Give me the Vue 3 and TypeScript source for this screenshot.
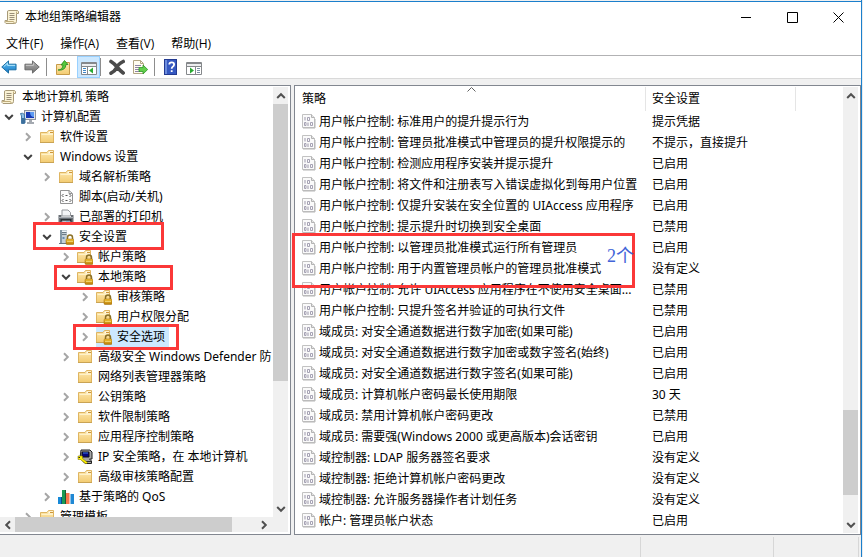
<script setup lang="ts">
import { ref } from 'vue'

interface TreeNode {
  label: string
  level: number
  icon: string
  state: 'open' | 'closed' | 'leaf'
}

interface Policy {
  name: string
  value: string
}

const menus: string[] = ['文件(F)', '操作(A)', '查看(V)', '帮助(H)']

const nodes: TreeNode[] = [
  { label: '本地计算机 策略', level: 0, icon: 'scroll', state: 'leaf' },
  { label: '计算机配置', level: 1, icon: 'computer', state: 'open' },
  { label: '软件设置', level: 2, icon: 'folder', state: 'closed' },
  { label: 'Windows 设置', level: 2, icon: 'folder', state: 'open' },
  { label: '域名解析策略', level: 3, icon: 'folder', state: 'closed' },
  { label: '脚本(启动/关机)', level: 3, icon: 'script', state: 'leaf' },
  { label: '已部署的打印机', level: 3, icon: 'printer', state: 'closed' },
  { label: '安全设置', level: 3, icon: 'server', state: 'open' },
  { label: '帐户策略', level: 4, icon: 'locked', state: 'closed' },
  { label: '本地策略', level: 4, icon: 'locked', state: 'open' },
  { label: '审核策略', level: 5, icon: 'locked', state: 'closed' },
  { label: '用户权限分配', level: 5, icon: 'locked', state: 'closed' },
  { label: '安全选项', level: 5, icon: 'locked', state: 'closed' },
  { label: '高级安全 Windows Defender 防', level: 4, icon: 'folder', state: 'closed' },
  { label: '网络列表管理器策略', level: 4, icon: 'folder', state: 'leaf' },
  { label: '公钥策略', level: 4, icon: 'folder', state: 'closed' },
  { label: '软件限制策略', level: 4, icon: 'folder', state: 'closed' },
  { label: '应用程序控制策略', level: 4, icon: 'folder', state: 'closed' },
  { label: 'IP 安全策略，在 本地计算机', level: 4, icon: 'ipsec', state: 'closed' },
  { label: '高级审核策略配置', level: 4, icon: 'folder', state: 'closed' },
  { label: '基于策略的 QoS', level: 3, icon: 'bars', state: 'closed' },
  { label: '管理模板', level: 2, icon: 'folder', state: 'closed' },
]

const policies: Policy[] = [
  { name: '用户帐户控制: 标准用户的提升提示行为', value: '提示凭据' },
  { name: '用户帐户控制: 管理员批准模式中管理员的提升权限提示的', value: '不提示，直接提升' },
  { name: '用户帐户控制: 检测应用程序安装并提示提升', value: '已启用' },
  { name: '用户帐户控制: 将文件和注册表写入错误虚拟化到每用户位置', value: '已启用' },
  { name: '用户帐户控制: 仅提升安装在安全位置的 UIAccess 应用程序', value: '已启用' },
  { name: '用户帐户控制: 提示提升时切换到安全桌面', value: '已禁用' },
  { name: '用户帐户控制: 以管理员批准模式运行所有管理员', value: '已启用' },
  { name: '用户帐户控制: 用于内置管理员帐户的管理员批准模式', value: '没有定义' },
  { name: '用户帐户控制: 允许 UIAccess 应用程序在不使用安全桌面...', value: '已禁用' },
  { name: '用户帐户控制: 只提升签名并验证的可执行文件', value: '已禁用' },
  { name: '域成员: 对安全通道数据进行数字加密(如果可能)', value: '已启用' },
  { name: '域成员: 对安全通道数据进行数字加密或数字签名(始终)', value: '已启用' },
  { name: '域成员: 对安全通道数据进行数字签名(如果可能)', value: '已启用' },
  { name: '域成员: 计算机帐户密码最长使用期限', value: '30 天' },
  { name: '域成员: 禁用计算机帐户密码更改', value: '已禁用' },
  { name: '域成员: 需要强(Windows 2000 或更高版本)会话密钥', value: '已启用' },
  { name: '域控制器: LDAP 服务器签名要求', value: '没有定义' },
  { name: '域控制器: 拒绝计算机帐户密码更改', value: '没有定义' },
  { name: '域控制器: 允许服务器操作者计划任务', value: '没有定义' },
  { name: '帐户: 管理员帐户状态', value: '已启用' },
]

const selected = ref('安全选项')
const treeThumb = { top: '0%', height: '70%' }
const treeThumbX = { left: '0%', width: '90%' }
const listThumb = { top: '74.3%', height: '20.6%' }
</script>

<template>
  <svg class="sprite" aria-hidden="true">
    <defs>
      <linearGradient id="g-folder" x1="0" y1="0" x2="0" y2="1">
        <stop offset="0" stop-color="#fdeab5" /><stop offset="1" stop-color="#f3cb70" />
      </linearGradient>
      <linearGradient id="g-lock" x1="0" y1="0" x2="0" y2="1">
        <stop offset="0" stop-color="#f4c63a" /><stop offset="1" stop-color="#b87c08" />
      </linearGradient>
      <linearGradient id="g-blue" x1="0" y1="0" x2="0" y2="1">
        <stop offset="0" stop-color="#67c8f4" /><stop offset="1" stop-color="#1273c4" />
      </linearGradient>
      <linearGradient id="g-gray" x1="0" y1="0" x2="0" y2="1">
        <stop offset="0" stop-color="#b0b0b0" /><stop offset="1" stop-color="#707070" />
      </linearGradient>
    </defs>
    <symbol id="i-scroll" viewBox="0 0 16 16">
      <path d="M4.500 1.500H13.500Q15 2 14.500 4.500H12.500V12.500Q12.500 14.500 10.500 14.500H2Q.5 14 1 11.500H3.500V3Q3.500 1.500 4.500 1.500Z" fill="#fbf3d5" stroke="#a89a78" />
      <path d="M5.500 4.500H10.500M5.500 6.500H10.500M5.500 8.500H10.500M5.500 10.500H10.500" stroke="#9a8f78" />
      <path d="M12.500 4.500Q12 2.500 13.500 2M1.500 12.500H9.500Q9.500 14 11 14.300" fill="none" stroke="#c0ad7c" />
    </symbol>
    <symbol id="i-computer" viewBox="0 0 16 16">
      <rect x="4.500" y="1.500" width="11" height="9" fill="#dfe3ea" stroke="#8c929c" />
      <rect x="6" y="3" width="8" height="6" fill="#1638b4" />
      <path d="M10 3H14V8Q10 8 10 3Z" fill="#5c9af2" />
      <path d="M9 11H12V13H14V15H7V13H9Z" fill="#a4a9b0" />
      <path d="M.5 4.500Q2.500 3.500 4.500 5.500V14.500H1.500V7Z" fill="#8cc0e8" stroke="#4478a4" />
      <path d="M2 9H5.500V14H2Z" fill="#3c6f9c" />
    </symbol>
    <symbol id="i-folder" viewBox="0 0 16 16">
      <path d="M1.500 3.500H8L9.500 1.500H14.500V13.500H1.500Z" fill="url(#g-folder)" stroke="#dfb561" />
      <path d="M9 4.500L10.300 2.500H14V4.500Z" fill="#fffbe9" />
      <path d="M11 3.500H14" stroke="#ce963a" />
      <path d="M2.500 5.500H14" stroke="#fff2c8" />
      <path d="M1 13.500H15" stroke="#c9a354" />
    </symbol>
    <symbol id="i-lock" viewBox="0 0 16 16">
      <path d="M9.500 10.500V8.500Q9.500 6 12 6T14.500 8.500V10.500" fill="none" stroke="#8b7127" stroke-width="1.500" />
      <rect x="8" y="10" width="8" height="5.500" rx="1" fill="url(#g-lock)" stroke="#9e6a08" stroke-width=".5" />
      <path d="M9 12.500H15" stroke="#f5dc7c" stroke-width=".8" />
    </symbol>
    <symbol id="i-locked" viewBox="0 0 16 16">
      <use href="#i-folder" x="-1" y="0" width="16" height="16" />
      <use href="#i-lock" />
    </symbol>
    <symbol id="i-server" viewBox="0 0 16 16">
      <path d="M2 1H9V15H2Z" fill="#c4d0d7" />
      <path d="M2 1H4V15H2Z" fill="#8397a4" />
      <path d="M4 3.500H8.500M4 5.500H8.500" stroke="#6b7a85" />
      <path d="M4 2.500H8.500" stroke="#f2f8fc" />
      <path d="M1 14.500H9" stroke="#667580" />
      <rect x="4.500" y="8" width="2" height="2" fill="#668bb0" />
      <use href="#i-lock" />
    </symbol>
    <symbol id="i-script" viewBox="0 0 16 16">
      <path d="M2.500 1.500H11L14.500 4.500V14.500H2.500Z" fill="#fcfcfc" stroke="#939393" />
      <path d="M11 1.500V4.500H14" fill="none" stroke="#939393" />
      <path d="M5.500 5L4 6.500L5.500 8M7.500 6.500H9.500M11.500 5L13 6.500L11.500 8M5.500 10L4 11.500L5.500 13M7.500 11.500H9.500M11.500 10L13 11.500L11.500 13" fill="none" stroke="#555" />
    </symbol>
    <symbol id="i-printer" viewBox="0 0 16 16">
      <path d="M4 1H10L12.500 3.500V7H4Z" fill="#f4f5f7" stroke="#96999d" />
      <path d="M.5 6H3.500V8H13V6H15.500V13H.500Z" fill="#6b7076" />
      <path d="M.500 8.500H15.500" stroke="#a7acb2" />
      <path d="M2.500 10H13.500V13H2.500Z" fill="#2c3034" />
      <path d="M4 12H12V15H4Z" fill="#eff6fb" stroke="#8d9aa5" />
      <rect x="8" y="12.500" width="3" height="2" fill="#5ba6de" />
    </symbol>
    <symbol id="i-ipsec" viewBox="0 0 16 16">
      <path d="M4 1H13L15 3V10H12.500L14.500 12V14.500H8L3 9Z" fill="#a4a4a4" stroke="#222" />
      <path d="M5 3H12V8H5Z" fill="#06067c" stroke="#111" />
      <path d="M6 4H11" stroke="#3f7aea" />
      <path d="M9 12.500H14" stroke="#333" />
      <path d="M1 7H5.500V9.500L10.500 13.500L9 15L3.500 10.500H1Z" fill="#fff200" stroke="#776e00" stroke-width=".5" />
      <path d="M1.500 8.500H3" stroke="#222" />
    </symbol>
    <symbol id="i-bars" viewBox="0 0 16 16">
      <rect x="0" y="8" width="3" height="7" fill="#1689d8" />
      <rect x="4" y="1" width="3.500" height="14" fill="#1b9a53" />
      <rect x="7" y="1" width="1" height="14" fill="#1c5b32" />
      <rect x="8" y="4" width="3.500" height="11" fill="#f7774d" />
      <rect x="12.500" y="5" width="3.500" height="10" fill="#2088d4" />
      <rect x="3" y="8" width="1" height="7" fill="#0b4b8a" />
    </symbol>
    <symbol id="i-policy" viewBox="0 0 14 15">
      <path d="M.5 .5H9.500L12.500 3.500V13.500H.5Z" fill="#fafafa" stroke="#c2c2c2" />
      <path d="M9.500 .5V3.500H12.500" fill="#e4e4e4" stroke="#b3b3b3" />
      <path d="M1 14H13V5" fill="none" stroke="#b5b5b5" />
      <path d="M3 3V6.500M6 8.500V12" stroke="#9c98ab" />
      <path d="M5.500 3.500H7.500V6.500H5.500ZM2.500 8.500H4V11.500H2.500ZM8.500 8.500H10.500V11.500H8.500Z" fill="none" stroke="#9c98ab" stroke-width=".9" />
    </symbol>
    <symbol id="i-back" viewBox="0 0 17 16">
      <path d="M.8 8L8 1.500V5H16V11H8V14.500Z" fill="url(#g-blue)" stroke="#14699f" />
      <path d="M3 7.500L7 4V6.300H15" fill="none" stroke="#b5e7ff" />
    </symbol>
    <symbol id="i-forward" viewBox="0 0 17 16">
      <path d="M16.200 8L9 1.500V5H1V11H9V14.500Z" fill="url(#g-gray)" stroke="#656565" />
      <path d="M2 6.300H10V4" fill="none" stroke="#c8c8c8" />
    </symbol>
    <symbol id="i-up" viewBox="0 0 16 16">
      <path d="M1.500 5.500H7L8.500 3.500H14.500V15.500H1.500Z" fill="url(#g-folder)" stroke="#c79b49" />
      <path d="M3 11Q7.500 11 8 6H6L9.500 1.500L13 5.500H11Q10.500 12 3 11Z" fill="#56c83d" stroke="#26881e" stroke-width=".8" />
    </symbol>
    <symbol id="i-tree" viewBox="0 0 16 16">
      <path d="M.5 3.500H15.500V15.500H.5Z" fill="#fff" stroke="#85888b" />
      <path d="M.5 4.500H15.500M.5 7.500H15.500M6.500 8V15" stroke="#85888b" />
      <path d="M1 6H15" stroke="#dadcdf" />
      <path d="M2 9.500H5M2 11.500H5M2 13.500H5" stroke="#4187c5" />
      <path d="M12 8.500V14.500L8 11.500Z" fill="#29aa31" />
    </symbol>
    <symbol id="i-action" viewBox="0 0 16 16">
      <path d="M.5 3.500H15.500V15.500H.5Z" fill="#fff" stroke="#85888b" />
      <path d="M.5 4.500H15.500M.5 7.500H15.500M9.500 8V15" stroke="#85888b" />
      <path d="M1 6H15" stroke="#dadcdf" />
      <path d="M11 9.500H14M11 11.500H14M11 13.500H14" stroke="#7990a4" />
      <path d="M4 8.500V14.500L8 11.500Z" fill="#29aa31" />
    </symbol>
    <symbol id="i-delete" viewBox="0 0 16 16">
      <path d="M2 2.500Q6 5 8 8Q11 11.500 14.200 14M14.200 2.500Q9 5 7.500 9Q5.500 12.500 2 14.200" fill="none" stroke="#4a4a4a" stroke-width="3.600" stroke-linecap="round" />
    </symbol>
    <symbol id="i-export" viewBox="0 0 16 16">
      <path d="M1.500 1.500H8.500L11.500 4.500V14.500H1.500Z" fill="#fffdf0" stroke="#b1a583" />
      <path d="M8.500 1.500V4.500H11" fill="none" stroke="#b1a583" />
      <path d="M3 6.500H9M3 8.500H7M3 10.500H7M3 12.500H8" stroke="#8e83a6" />
      <path d="M7 8.500H11V6L15.700 10.500L11 15V12.500H7Z" fill="#62cf4b" stroke="#2e9628" stroke-width=".8" />
    </symbol>
    <symbol id="i-help" viewBox="0 0 14 16">
      <rect x=".5" y=".5" width="12" height="15" fill="#3558c1" stroke="#233a91" />
      <path d="M1 1H3V15H1Z" fill="#6d8ddd" />
      <path d="M5.300 5.500Q5.300 3.300 7.700 3.300T10.100 5.500Q10.100 7 8.700 7.700Q7.700 8.300 7.700 9.800M7.700 11.200V13" fill="none" stroke="#fff" stroke-width="1.800" />
    </symbol>
    <symbol id="i-chevron" viewBox="0 0 10 10">
      <path d="M1.200 3L5 6.800L8.800 3" fill="none" stroke="currentColor" stroke-width="2" />
    </symbol>
  </svg>

  <div class="window">
    <header class="title-bar">
      <svg class="icon"><use href="#i-scroll" /></svg>
      <h1>本地组策略编辑器</h1>
      <div class="window-buttons">
        <button type="button" aria-label="最小化"><svg class="glyph" viewBox="0 0 11 11"><path d="M0 5.500H10" /></svg></button>
        <button type="button" aria-label="最大化"><svg class="glyph" viewBox="0 0 11 11"><path d="M.5 .5H10.500V10.500H.5Z" /></svg></button>
        <button type="button" aria-label="关闭"><svg class="glyph" viewBox="0 0 11 11"><path d="M.5 .5L10.500 10.500M10.500 .5L.5 10.500" /></svg></button>
      </div>
    </header>

    <nav class="menu-bar">
      <button v-for="menu in menus" :key="menu" type="button">{{ menu }}</button>
    </nav>

    <div class="toolbar" role="toolbar">
      <button type="button" aria-label="后退"><svg class="icon"><use href="#i-back" /></svg></button>
      <button type="button" aria-label="前进"><svg class="icon"><use href="#i-forward" /></svg></button>
      <span class="separator"></span>
      <button type="button" aria-label="向上"><svg class="icon"><use href="#i-up" /></svg></button>
      <button type="button" class="pressed" aria-label="显示控制台树" aria-pressed="true"><svg class="icon"><use href="#i-tree" /></svg></button>
      <span class="separator"></span>
      <button type="button" aria-label="删除"><svg class="icon"><use href="#i-delete" /></svg></button>
      <button type="button" aria-label="导出列表"><svg class="icon"><use href="#i-export" /></svg></button>
      <span class="separator"></span>
      <button type="button" aria-label="帮助"><svg class="icon"><use href="#i-help" /></svg></button>
      <button type="button" aria-label="显示操作窗格"><svg class="icon"><use href="#i-action" /></svg></button>
    </div>

    <main class="panes">
      <section class="pane tree-pane">
        <div class="viewport">
          <ul class="tree">
            <li v-for="node in nodes" :key="node.label" :class="['node', 'level-' + node.level]">
              <button v-if="node.state !== 'leaf'" type="button" :class="['toggle', node.state]" :aria-label="'展开 ' + node.label">
                <svg class="chevron"><use href="#i-chevron" /></svg>
              </button>
              <button type="button" :class="['label', { selected: node.label === selected }]" @click="selected = node.label">
                <svg class="icon"><use :href="'#i-' + node.icon" /></svg>
                <span>{{ node.label }}</span>
              </button>
            </li>
          </ul>
        </div>
        <div class="scroll-y">
          <button type="button" class="arrow up" aria-label="向上滚动"><svg class="chevron"><use href="#i-chevron" /></svg></button>
          <div class="track"><div class="thumb" :style="treeThumb"></div></div>
          <button type="button" class="arrow" aria-label="向下滚动"><svg class="chevron"><use href="#i-chevron" /></svg></button>
        </div>
        <div class="scroll-x">
          <button type="button" class="arrow left" aria-label="向左滚动"><svg class="chevron"><use href="#i-chevron" /></svg></button>
          <div class="track"><div class="thumb" :style="treeThumbX"></div></div>
          <button type="button" class="arrow right" aria-label="向右滚动"><svg class="chevron"><use href="#i-chevron" /></svg></button>
        </div>
      </section>

      <section class="pane list-pane">
        <div class="viewport">
          <table class="policies">
            <colgroup><col class="name-column" /><col class="value-column" /><col /></colgroup>
            <thead>
              <tr>
                <th scope="col" aria-sort="ascending">策略<svg class="sort" viewBox="0 0 9 5"><path d="M.5 4.500L4.500 .5L8.500 4.500" /></svg></th>
                <th scope="col">安全设置</th>
                <td></td>
              </tr>
            </thead>
            <tbody>
              <tr v-for="policy in policies" :key="policy.name">
                <td><div class="policy"><svg class="policy-icon"><use href="#i-policy" /></svg><span>{{ policy.name }}</span></div></td>
                <td>{{ policy.value }}</td>
                <td></td>
              </tr>
            </tbody>
          </table>
        </div>
        <div class="scroll-y">
          <button type="button" class="arrow up" aria-label="向上滚动"><svg class="chevron"><use href="#i-chevron" /></svg></button>
          <div class="track"><div class="thumb" :style="listThumb"></div></div>
          <button type="button" class="arrow" aria-label="向下滚动"><svg class="chevron"><use href="#i-chevron" /></svg></button>
        </div>
      </section>

      <div class="mark mark-security"></div>
      <div class="mark mark-local"></div>
      <div class="mark mark-options"></div>
      <div class="mark mark-policies"></div>
      <span class="note">2个</span>
    </main>

    <footer class="status-bar">
      <span class="status-main"></span>
      <span class="status-middle"></span>
      <span class="status-end"></span>
    </footer>
  </div>
</template>

<style>
body {
  background: #e8ecee;
}
</style>

<style scoped>
.sprite {
  position: absolute;
  width: 0;
  height: 0;
}

.window {
  box-sizing: border-box;
  height: 100vh;
  padding-top: 1px;
  margin-right: 1px;
  display: flex;
  flex-direction: column;
  overflow: hidden;
  border-right: 1px solid #1b7fcc;
  background: #f0f0f0;
  color: #000;
  font: 12px/20px "Noto Sans", "Noto Sans CJK SC", sans-serif;
}

button {
  padding: 0;
  border: 0;
  background: none;
  color: inherit;
  font: inherit;
  display: flex;
  align-items: center;
  justify-content: center;
}

.icon {
  width: 16px;
  height: 16px;
  flex: none;
}

.chevron {
  width: 10px;
  height: 10px;
  flex: none;
}

.title-bar {
  flex: none;
  height: 30px;
  display: flex;
  align-items: center;
  gap: 5px;
  padding-left: 4px;
  border-top: 1px solid #1b7fcc;
  background: #fff;
}

.title-bar h1 {
  margin: 0;
  font-size: 12px;
  font-weight: 400;
}

.window-buttons {
  margin-left: auto;
  display: flex;
}

.window-buttons button {
  width: 46px;
  height: 28px;
}

.glyph {
  width: 11px;
  height: 11px;
  fill: none;
  stroke: #000;
}

.menu-bar {
  flex: none;
  height: 23px;
  display: flex;
  gap: 17px;
  padding-left: 6px;
  border-bottom: 1px solid #b2b2b4;
  background: #fff;
  font-family: "Open Sans", "Noto Sans CJK SC", sans-serif;
}

.toolbar {
  flex: none;
  height: 22px;
  display: flex;
  align-items: center;
  border-bottom: 1px solid #d9d9d9;
  background: #fff;
}

.toolbar button {
  box-sizing: border-box;
  width: 23px;
  height: 22px;
  padding-right: 5px;
}

.toolbar .pressed {
  padding: 0;
  border: 1px solid #99d1ff;
  background: #cce8ff;
}

.separator {
  width: 1px;
  height: 18px;
  margin: 0 7px 0 0;
  background: #8d8d8d;
}

.panes {
  position: relative;
  flex: 1;
  min-height: 0;
  display: flex;
  gap: 3px;
  padding-top: 6px;
}

.pane {
  box-sizing: border-box;
  display: grid;
  grid-template-columns: minmax(0, 1fr) 15px;
  border: 1px solid #828790;
  background: #fff;
}

.tree-pane {
  flex: 0 0 291px;
  grid-template-rows: minmax(0, 1fr) 15px;
  border-left: 0;
  padding: 1px 2px 2px 0;
}

.list-pane {
  flex: 1;
  min-width: 0;
  grid-template-rows: minmax(0, 1fr);
  padding: 1px 2px 1px 0;
}

.viewport {
  overflow: hidden;
}

.tree {
  margin: 0;
  padding: 0;
  list-style: none;
}

.node {
  height: 20px;
  display: flex;
  align-items: center;
  padding-left: 1px;
  white-space: nowrap;
}

.label {
  gap: 5px;
  height: 20px;
  padding-right: 4px;
}

.label.selected {
  background: #cce8ff;
}

.toggle {
  width: 14px;
  height: 20px;
  margin-right: 4px;
  flex: none;
  color: #404040;
}

.toggle.closed {
  color: #a6a6a6;
}

.toggle.closed .chevron {
  transform: rotate(-90deg);
}

.level-1 { padding-left: 2px; }
.level-2 { padding-left: 21px; }
.level-3 { padding-left: 40px; }
.level-4 { padding-left: 59px; }
.level-5 { padding-left: 78px; }

.level-3 > .label:first-child,
.level-4 > .label:first-child {
  margin-left: 18px;
}

.scroll-y,
.scroll-x {
  display: flex;
  background: #f0f0f0;
}

.scroll-y {
  flex-direction: column;
}

.scroll-x {
  grid-column: 1 / -1;
}

.arrow {
  flex: none;
  width: 15px;
  height: 17px;
  color: #505050;
}

.scroll-x .arrow {
  height: 15px;
}

.scroll-x .right {
  margin-right: 17px;
}

.up .chevron { transform: rotate(180deg); }
.left .chevron { transform: rotate(90deg); }
.right .chevron { transform: rotate(-90deg); }

.track {
  position: relative;
  flex: 1;
}

.thumb {
  position: absolute;
  background: #cdcdcd;
}

.scroll-y .thumb { width: 100%; }
.scroll-x .thumb { height: 100%; }

.policies {
  width: 100%;
  table-layout: fixed;
  border-collapse: separate;
  border-spacing: 0;
}

.name-column { width: 351px; }
.value-column { width: 150px; }

.policies th,
.policies td {
  height: 21px;
  padding: 0 0 0 6px;
  line-height: 21px;
  text-align: left;
  font-weight: 400;
  white-space: nowrap;
}

.policies th {
  position: relative;
  height: 24px;
  line-height: 24px;
  border-right: 1px solid #e5e5e5;
}

.policies th:first-child,
.policies td:first-child {
  padding-left: 7px;
}

.sort {
  position: absolute;
  top: 0;
  left: 49%;
  width: 9px;
  height: 5px;
  fill: none;
  stroke: #606060;
}

.policy {
  display: flex;
  align-items: center;
  gap: 3px;
}

.policy-icon {
  width: 14px;
  height: 15px;
  flex: none;
}

.mark {
  position: absolute;
  box-sizing: border-box;
  border: 3px solid #fb3838;
  pointer-events: none;
}

.mark-security { left: 33px; top: 143px; width: 131px; height: 28px; }
.mark-local { left: 54px; top: 186px; width: 119px; height: 25px; }
.mark-options { left: 73px; top: 245px; width: 106px; height: 26px; }
.mark-policies { left: 292px; top: 154px; width: 343px; height: 55px; }

.note {
  position: absolute;
  left: 607px;
  top: 166px;
  color: #4264d8;
  font: 18px/22px "Liberation Serif", "Noto Sans CJK SC", serif;
}

.status-bar {
  flex: none;
  height: 20px;
  display: flex;
  padding: 2px 2px 0 0;
}

.status-bar span {
  border-right: 1px solid #d7d7d7;
}

.status-main { flex: 1; }
.status-middle { width: 132px; }
.status-end { width: 84px; }
</style>
